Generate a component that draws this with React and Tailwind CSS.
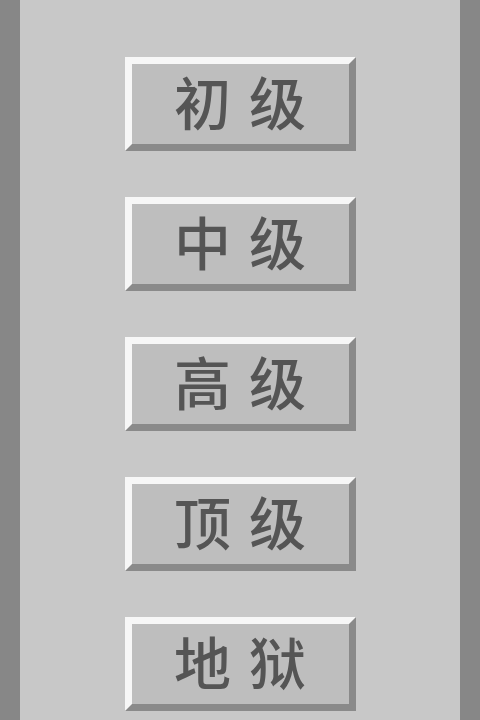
import React from "react";

const levels = ["初级", "中级", "高级", "顶级", "地狱"];

const LevelButton = ({ label }) => (
  <button className="w-[231px] h-[94px] border-[7px] border-t-[#f7f7f7] border-l-[#f7f7f7] border-b-[#8a8a8a] border-r-[#8a8a8a] bg-[#bebebe] flex items-center justify-center">
    <span className="text-[57px] leading-none font-medium text-[#555555] tracking-[18px] pl-[18px] mb-[8px] font-['Noto_Sans_CJK_SC',sans-serif]">
      {label}
    </span>
  </button>
);

export default function App() {
  return (
    <div className="w-[480px] h-[720px] flex bg-[#c8c8c8] overflow-hidden">
      <div className="w-[20px] bg-[#878787]" />
      <main className="flex-1 flex flex-col items-center pt-[57px] gap-[46px]">
        {levels.map((l) => (
          <LevelButton key={l} label={l} />
        ))}
      </main>
      <div className="w-[20px] bg-[#878787]" />
    </div>
  );
}
